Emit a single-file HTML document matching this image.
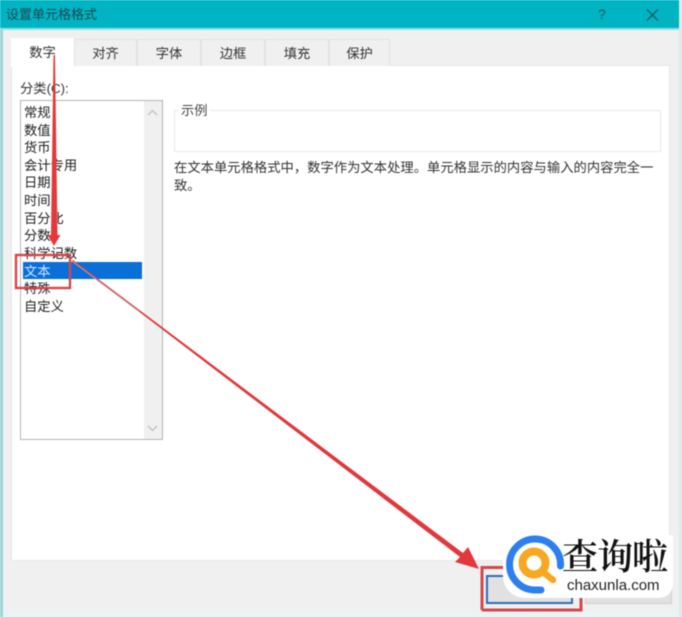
<!DOCTYPE html>
<html lang="zh">
<head>
<meta charset="utf-8">
<title>设置单元格格式</title>
<style>
html,body{margin:0;padding:0;background:#e6f2f3;}
#p{position:relative;width:682px;height:617px;overflow:hidden;background:#e9f4f5;font-family:"Liberation Sans","Noto Sans CJK SC",sans-serif;color:#222;filter:blur(.45px);}
#p div{position:absolute;box-sizing:border-box;}
.t{font-size:13.3px;line-height:18px;white-space:nowrap;}
.tab{top:39px;height:27px;background:#f0f0f0;border:1px solid #e2e2e2;border-bottom:0;font-size:13.300px;line-height:27px;text-align:center;color:#333;}
svg{position:absolute;left:0;top:0;}
</style>
</head>
<body>
<div id="p">
  <div style="left:0;top:0;width:3px;height:617px;background:#9fd3d8"></div>
  <div style="left:3px;top:28px;width:676px;height:584px;background:#f0f0f0"></div>
  <div style="left:0;top:0;width:679px;height:28px;background:#00b4c3"></div>
  <div style="left:0;top:28px;width:679px;height:2px;background:#8fe3e6"></div>
  <div style="left:679px;top:0;width:3px;height:617px;background:#dfe9ea"></div>
  <div class="t" style="left:6px;top:6px;font-size:13px;color:#1f4a52">设置单元格格式</div>
  <div class="t" style="left:598px;top:5px;color:#1f5a63;font-size:14px">?</div>
  <svg width="682" height="30" style="z-index:1"><path d="M647 9.500L658 20.500M658 9.500L647 20.500" stroke="#1f5a63" stroke-width="1.300" fill="none"/></svg>

  <div style="left:11px;top:65px;width:659px;height:496px;background:#fff;border:1px solid #e8e8e8"></div>
  <div class="tab" style="left:74px;width:63px">对齐</div>
  <div class="tab" style="left:137px;width:64px">字体</div>
  <div class="tab" style="left:201px;width:64px">边框</div>
  <div class="tab" style="left:265px;width:64px">填充</div>
  <div class="tab" style="left:329px;width:61px">保护</div>
  <div class="tab" style="left:11px;top:38px;width:63px;height:29px;background:#fff;border:0;line-height:29px">数字</div>

  <div class="t" style="left:20px;top:80px;color:#333">分类(C):</div>

  <div style="left:20px;top:100px;width:143px;height:340px;background:#fff;border:1px solid #b4b4b4"></div>
  <div style="left:144px;top:101px;width:18px;height:338px;background:#f0f0f0"></div>
  <svg width="682" height="617"><path d="M148 115L152.500 110.500L157 115M148 426L152.500 430.500L157 426" stroke="#c4c4c4" stroke-width="1.500" fill="none"/></svg>
  <div style="left:23px;top:262px;width:119px;height:17px;background:#0a6fd6"></div>
  <div class="t" style="left:24px;top:104px">常规</div>
  <div class="t" style="left:24px;top:122px">数值</div>
  <div class="t" style="left:24px;top:139px">货币</div>
  <div class="t" style="left:24px;top:157px">会计专用</div>
  <div class="t" style="left:24px;top:174px">日期</div>
  <div class="t" style="left:24px;top:192px">时间</div>
  <div class="t" style="left:24px;top:210px">百分比</div>
  <div class="t" style="left:24px;top:227px">分数</div>
  <div class="t" style="left:24px;top:245px">科学记数</div>
  <div class="t" style="left:24px;top:263px;color:#cfe6ff">文本</div>
  <div class="t" style="left:24px;top:280px">特殊</div>
  <div class="t" style="left:24px;top:298px">自定义</div>

  <div style="left:174px;top:110px;width:487px;height:42px;border:1px solid #e8e8e8"></div>
  <div class="t" style="left:179px;top:102px;background:#fff;padding:0 2px;color:#444">示例</div>
  <div class="t" style="left:174px;top:159px;color:#333;letter-spacing:.02px">在文本单元格格式中，数字作为文本处理。单元格显示的内容与输入的内容完全一</div>
  <div class="t" style="left:174px;top:177px;color:#333">致。</div>

  <div style="left:3px;top:561px;width:676px;height:51px;background:#f0f0f0"></div>
  <div style="left:486px;top:575px;width:87px;height:29px;background:#e1e1e1;border:2px solid #2f6db5"></div>
  <div style="left:585px;top:575px;width:87px;height:29px;background:#e1e1e1;border:1px solid #cfcfcf"></div>

  <svg width="682" height="617">
    <path d="M53.500 55L55 55L57.500 235L60.500 235L54 246L47.500 235L51 235Z" fill="#e5383b"/>
    <rect x="16" y="255" width="54" height="33" fill="none" stroke="#d9434a" stroke-width="2.400"/>
    <path d="M72 260.500L73 260L463 553L468 547L479 569L455 562L460 557Z" fill="#e0383c"/>
    <path d="M72 261L140 312" stroke="#c8878f" stroke-width="1.300" fill="none"/>
    <path d="M482 610V567.500H530M530 610H581V567" fill="none" stroke="#d5474c" stroke-width="3"/>
    <path d="M482 610H581" fill="none" stroke="#d5474c" stroke-width="3"/>
  </svg>

  <div style="left:503px;top:535px;width:170px;height:63px;background:#fff;border-radius:26px 0 14px 22px"></div>
  <svg width="682" height="617">
    <path d="M560.500 566A25.500 25.500 0 1 0 535 590" fill="none" stroke="#2d7ff0" stroke-width="7" stroke-linecap="round"/>
    <path d="M535 590H541" fill="none" stroke="#2d7ff0" stroke-width="7" stroke-linecap="round"/>
    <circle cx="534" cy="563" r="11.500" fill="none" stroke="#f8a722" stroke-width="8"/>
    <path d="M543 572L553 580" stroke="#f8a722" stroke-width="6.500" stroke-linecap="round"/>
  </svg>
  <div class="t" style="left:562px;top:533px;font-size:36px;line-height:44px;color:#111;width:110px;letter-spacing:-1px;font-weight:600;font-family:'Noto Serif CJK SC','Liberation Serif',serif">查询啦</div>
  <div class="t" style="left:567px;top:577px;font-size:15px;line-height:18px;color:#222">chaxunla.com</div>
</div>
</body>
</html>
